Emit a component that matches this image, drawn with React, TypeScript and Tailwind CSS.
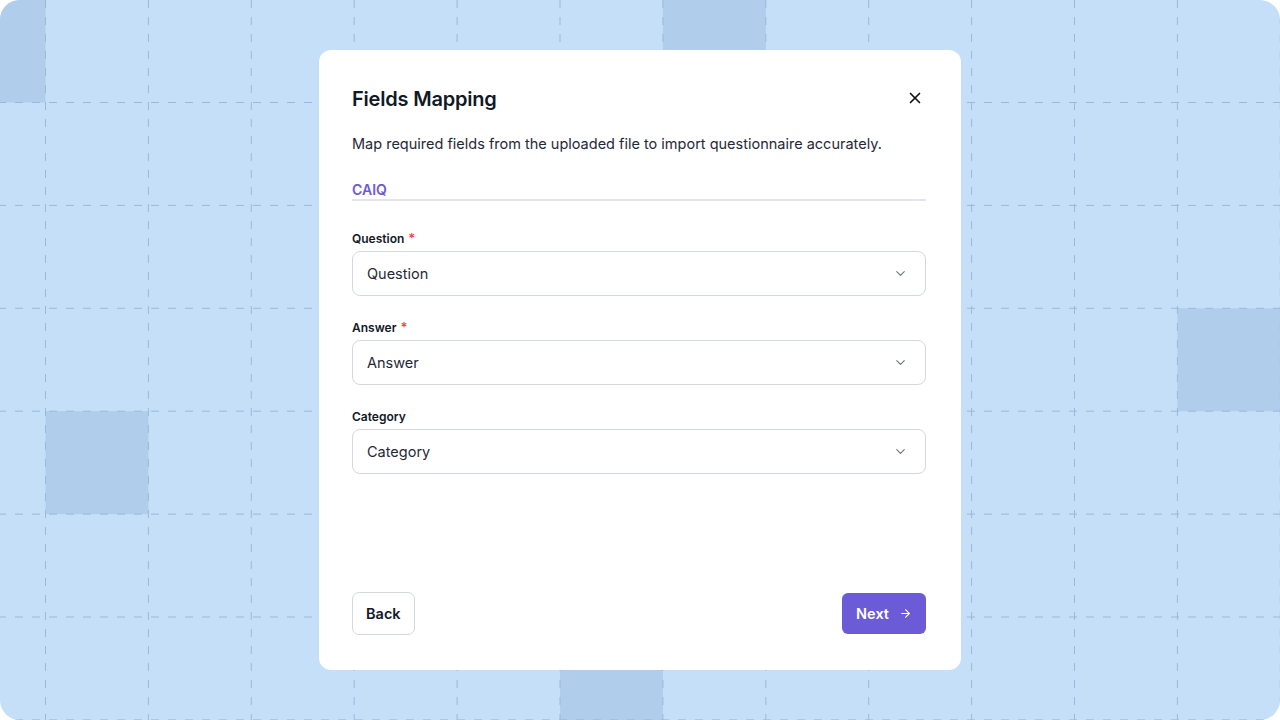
import React from "react";
import { ChevronDown, ArrowRight, X } from "lucide-react";

const STEP = 102.9;
const X0 = 45.5;
const Y0 = 102.5;

function GridBg() {
  const vs: number[] = [];
  for (let k = 0; k < 13; k++) vs.push(X0 + k * STEP);
  const hs: number[] = [];
  for (let k = 0; k < 7; k++) hs.push(Y0 + k * STEP);
  const cells: [number, number, number, number][] = [
    [0, 0, X0, Y0],
    [X0 + 6 * STEP, 0, STEP, Y0],
    [X0 + 11 * STEP, Y0 + 2 * STEP, 200, STEP],
    [X0, Y0 + 3 * STEP, STEP, STEP],
    [X0 + 5 * STEP, Y0 + 5 * STEP, STEP, 200],
  ];
  return (
    <svg className="absolute inset-0" width="1280" height="720" viewBox="0 0 1280 720">
      {cells.map((c, i) => (
        <rect key={i} x={c[0]} y={c[1]} width={c[2]} height={c[3]} fill="#b0cdeb" />
      ))}
      {vs.map((x, i) => (
        <line key={"v" + i} x1={x} y1={0} x2={x} y2={720} stroke="#9bb8da" strokeWidth={1} strokeDasharray="8 9" />
      ))}
      {hs.map((y, i) => (
        <line key={"h" + i} x1={0} y1={y} x2={1280} y2={y} stroke="#9bb8da" strokeWidth={1} strokeDasharray="8 9" strokeDashoffset={2} />
      ))}
    </svg>
  );
}

function Field({ label, required, placeholder }: { label: string; required?: boolean; placeholder: string }) {
  return (
    <div className="flex flex-col">
      <div className="h-[16px] text-[12px] font-semibold text-[#111827] leading-[16px] flex items-start gap-[4px]">
        <span>{label}</span>
        {required && <span className="text-[#ef4444] text-[13px] leading-[14px]">*</span>}
      </div>
      <div className="mt-[4px] h-[45px] rounded-[8px] border border-[#d3d8df] bg-white flex items-center justify-between pl-[14px] pr-[17px]">
        <span className="text-[14.5px] text-[#1f2937]">{placeholder}</span>
        <ChevronDown size={15} strokeWidth={1.75} className="text-[#6b7280]" />
      </div>
    </div>
  );
}

export default function App() {
  return (
    <div className="w-[1280px] h-[720px] bg-white" style={{ fontFamily: "Inter, 'Noto Sans', sans-serif" }}>
      <div className="relative w-full h-full rounded-[20px] overflow-hidden bg-[#c6dff8] flex items-center justify-center">
        <GridBg />
        <div className="relative w-[642px] h-[620px] bg-white rounded-[12px] pl-[33px] pr-[35px] pt-[34px] pb-[35px] flex flex-col">
          <div className="flex items-center justify-between h-[30px]">
            <h1 className="text-[20px] font-semibold text-[#111827] tracking-[-0.2px]">Fields Mapping</h1>
            <X size={18} strokeWidth={2.2} className="text-[#111] mr-[2px] -mt-[2px]" />
          </div>
          <p className="mt-[20px] text-[14.5px] text-[#1f2937] leading-[20px]">
            Map required fields from the uploaded file to import questionnaire accurately.
          </p>
          <div className="mt-[27px] border-b-2 border-[#e2e6eb]">
            <span className="block text-[14px] font-semibold text-[#6b5bd6] leading-[18px]">CAIQ</span>
          </div>
          <div className="mt-[30px] flex flex-col gap-[24px]">
            <Field label="Question" required placeholder="Question" />
            <Field label="Answer" required placeholder="Answer" />
            <Field label="Category" placeholder="Category" />
          </div>
          <div className="mt-auto flex items-center justify-between">
            <button className="h-[43px] px-[13px] rounded-[7px] border border-[#d3d8df] bg-white text-[14.5px] font-semibold text-[#111827]">
              Back
            </button>
            <button className="h-[41px] px-[14px] rounded-[6px] bg-[#6b5bd6] text-white text-[14.5px] font-semibold flex items-center gap-[10px]">
              Next
              <ArrowRight size={13} strokeWidth={2} />
            </button>
          </div>
        </div>
      </div>
    </div>
  );
}
